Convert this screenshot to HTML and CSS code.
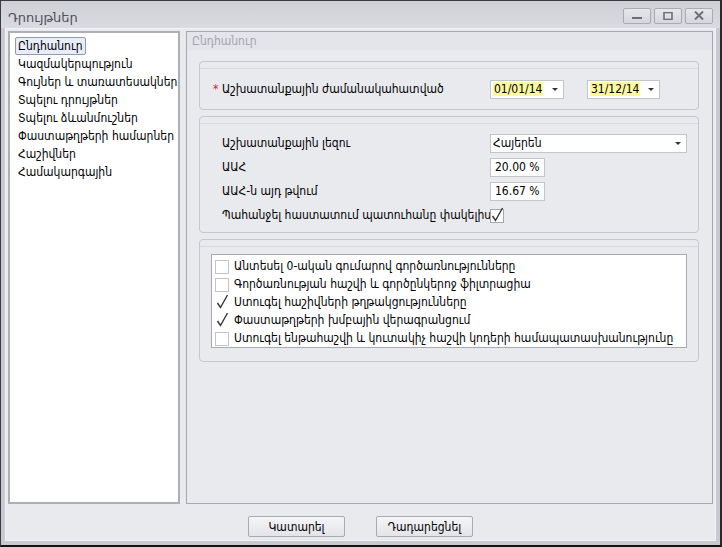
FILE: index.html
```html
<!DOCTYPE html>
<html lang="hy">
<head>
    <meta charset="UTF-8">
    <title>Դրույթներ</title>
    <link rel="stylesheet" href="styles.css">
</head>
<body>
    <div class="window">
        <div class="titlebar">
            <span class="title">Դրույթներ</span>
            <div class="wbtns">
                <span class="wbtn"><svg width="12" height="8" viewBox="0 0 12 8"><rect x="1" y="5" width="10" height="2" fill="#6e6e78"/></svg></span>
                <span class="wbtn"><svg width="12" height="8" viewBox="0 0 12 8"><rect x="2" y="0.5" width="8" height="7" fill="none" stroke="#6e6e78" stroke-width="1.6"/></svg></span>
                <span class="wbtn"><svg width="12" height="9" viewBox="0 0 12 9"><path d="M2 0.5 L10 8.5 M10 0.5 L2 8.5" stroke="#6e6e78" stroke-width="2"/></svg></span>
            </div>
        </div>
        <div class="client">
            <div class="panels">
                <ul class="nav">
                    <li class="active"><span>Ընդհանուր</span></li>
                    <li><span>Կազմակերպություն</span></li>
                    <li><span>Գույներ և տառատեսակներ</span></li>
                    <li><span>Տպելու դրույթներ</span></li>
                    <li><span>Տպելու ձևանմուշներ</span></li>
                    <li><span>Փաստաթղթերի համարներ</span></li>
                    <li><span>Հաշիվներ</span></li>
                    <li><span>Համակարգային</span></li>
                </ul>
                <div class="page">
                    <div class="page-head">Ընդհանուր</div>
                    <div class="page-body">
                        <div class="group">
                            <div class="row period">
                                <span class="label"><span class="req">*</span>Աշխատանքային ժամանակահատված</span>
                                <span class="combo date"><span class="hl">01/01/14</span><i class="arrow"></i></span>
                                <span class="combo date date2"><span class="hl">31/12/14</span><i class="arrow"></i></span>
                            </div>
                        </div>
                        <div class="group">
                            <div class="rows">
                                <div class="row">
                                    <span class="label">Աշխատանքային լեզու</span>
                                    <span class="combo lang"><span>Հայերեն</span><i class="arrow"></i></span>
                                </div>
                                <div class="row">
                                    <span class="label">ԱԱՀ</span>
                                    <span class="field">20.00 %</span>
                                </div>
                                <div class="row">
                                    <span class="label">ԱԱՀ-ն այդ թվում</span>
                                    <span class="field">16.67 %</span>
                                </div>
                                <div class="row">
                                    <span class="label">Պահանջել հաստատում պատուհանը փակելիս</span>
                                    <svg class="check" width="15" height="16" viewBox="0 0 15 16"><rect x="0.5" y="2.5" width="13" height="13" fill="#fff" stroke="#a6a7ae"/><path d="M2.5 9 L5.5 13.5 L12.5 1" fill="none" stroke="#333" stroke-width="1.4"/></svg>
                                </div>
                            </div>
                        </div>
                        <div class="group">
                            <ul class="checklist">
                                <li><svg class="check" width="15" height="16" viewBox="0 0 15 16"><rect x="0.5" y="2.5" width="13" height="13" fill="#fff" stroke="#c4c5cb"/></svg>Անտեսել 0-ական գումարով գործառնությունները</li>
                                <li><svg class="check" width="15" height="16" viewBox="0 0 15 16"><rect x="0.5" y="2.5" width="13" height="13" fill="#fff" stroke="#c4c5cb"/></svg>Գործառնության հաշվի և գործընկերոջ ֆիլտրացիա</li>
                                <li><svg class="check" width="15" height="16" viewBox="0 0 15 16"><path d="M2.5 9 L5.5 13.5 L12.5 1" fill="none" stroke="#333" stroke-width="1.4"/></svg>Ստուգել հաշիվների թղթակցությունները</li>
                                <li><svg class="check" width="15" height="16" viewBox="0 0 15 16"><path d="M2.5 9 L5.5 13.5 L12.5 1" fill="none" stroke="#333" stroke-width="1.4"/></svg>Փաստաթղթերի խմբային վերագրանցում</li>
                                <li><svg class="check" width="15" height="16" viewBox="0 0 15 16"><rect x="0.5" y="2.5" width="13" height="13" fill="#fff" stroke="#c4c5cb"/></svg>Ստուգել ենթահաշվի և կուտակիչ հաշվի կոդերի համապատասխանությունը</li>
                            </ul>
                        </div>
                    </div>
                </div>
            </div>
            <div class="buttons">
                <span class="btn">Կատարել</span>
                <span class="btn">Դադարեցնել</span>
            </div>
        </div>
    </div>
</body>
</html>
```

FILE: styles.css
```css
*{
    margin: 0;
    padding: 0;
    box-sizing: border-box;
}
body{
    width: 722px;
    height: 547px;
    font-family: "DejaVu Sans Condensed", "DejaVu Sans", sans-serif;
    font-size: 12px;
    color: #000;
    background: #1e1e1e;
}
.window{
    width: 722px;
    height: 547px;
    border: 1px solid #3a3a40;
    border-bottom: 2px solid #111;
    border-right: 2px solid #2a2a2e;
    background: #c9cad1;
    display: flex;
    flex-direction: column;
    padding: 0 4px 4px 4px;
}
.titlebar{
    height: 27px;
    background: linear-gradient(#cfd0d6, #dadbe0);
    margin: 0 -4px;
    padding: 0 7px;
    display: flex;
    align-items: center;
    justify-content: space-between;
}
.title{
    color: #505058;
    font-family: "DejaVu Sans", sans-serif;
    font-size: 13px;
    padding-top: 6px;
}
.wbtns{
    display: flex;
    gap: 3px;
    padding-top: 2px;
}
.wbtn{
    width: 28px;
    height: 16px;
    border: 1px solid #a9aab2;
    border-radius: 2px;
    background: linear-gradient(#e6e7eb, #d6d7dd);
    display: flex;
    align-items: center;
    justify-content: center;
}
.client{
    flex: 1;
    min-height: 0;
    border: 1px solid #f2f2f5;
    background: #e9eaee;
    display: flex;
    flex-direction: column;
    padding: 2px 2px 3px 2px;
}
.panels{
    flex: 1;
    min-height: 0;
    display: flex;
    gap: 6px;
}
.nav{
    width: 172px;
    flex: none;
    list-style: none;
    background: #fff;
    border: 2px solid #aeafb6;
    padding: 4px 0 0 5px;
}
.nav li{
    height: 18px;
    line-height: 18px;
    white-space: nowrap;
}
.nav li span{
    display: inline-block;
    padding: 0 2px;
    line-height: 16px;
    border: 1px solid transparent;
}
.nav li.active span{
    background: #e8edf8;
    border-color: #8e9ab3;
    border-radius: 2px;
}
.page{
    flex: 1;
    min-width: 0;
    border: 1px solid #a7a8af;
    display: flex;
    flex-direction: column;
}
.page-head{
    height: 18px;
    line-height: 18px;
    padding-left: 5px;
    color: #a3a4ac;
    background: #e4e5ea;
}
.page-body{
    padding: 11px 13px 0 12px;
    display: flex;
    flex-direction: column;
    gap: 6px;
}
.group{
    border: 1px solid #c6c7cd;
    border-radius: 4px;
}
.group::before{
    content: "";
    display: block;
    height: 6px;
    border-bottom: 1px solid #d8d9de;
}
.row{
    display: flex;
    align-items: center;
    padding-left: 22px;
}
.period{
    height: 40px;
}
.label{
    width: 268px;
    flex: none;
    white-space: nowrap;
}
.req{
    color: #e02020;
    margin-left: -9px;
    width: 9px;
    display: inline-block;
}
.combo, .field{
    height: 19px;
    flex: none;
    white-space: nowrap;
    background: #fff;
    border: 1px solid #c4c5cb;
    display: flex;
    align-items: center;
    padding-left: 2px;
}
.date{
    width: 74px;
}
.date2{
    margin-left: 23px;
    width: 73px;
}
.hl{
    background: #fdfa9c;
    padding: 0 1px;
}
.arrow{
    margin-left: auto;
    margin-right: 5px;
    border: 3px solid transparent;
    border-top: 3px solid #333;
    border-bottom: 0;
}
.lang{
    width: 197px;
}
.field{
    width: 55px;
    padding-left: 4px;
}
.rows{
    padding: 9px 0 7px 0;
    display: flex;
    flex-direction: column;
    gap: 4px;
}
.rows .row{
    height: 20px;
}
.check{
    flex: none;
}
.checklist{
    list-style: none;
    background: #fff;
    border: 1px solid #a9aab1;
    margin: 7px 11px 13px 11px;
    padding: 2px 0 0 3px;
    overflow: hidden;
}
.checklist li{
    height: 18px;
    display: flex;
    align-items: center;
    gap: 4px;
    white-space: nowrap;
}
.buttons{
    height: 33px;
    flex: none;
    display: flex;
    justify-content: center;
    align-items: flex-end;
    gap: 31px;
}
.btn{
    width: 97px;
    height: 21px;
    border: 1px solid #a9aab1;
    border-radius: 2px;
    background: linear-gradient(#f5f5f7, #e3e4e8);
    display: flex;
    align-items: center;
    justify-content: center;
}
```
